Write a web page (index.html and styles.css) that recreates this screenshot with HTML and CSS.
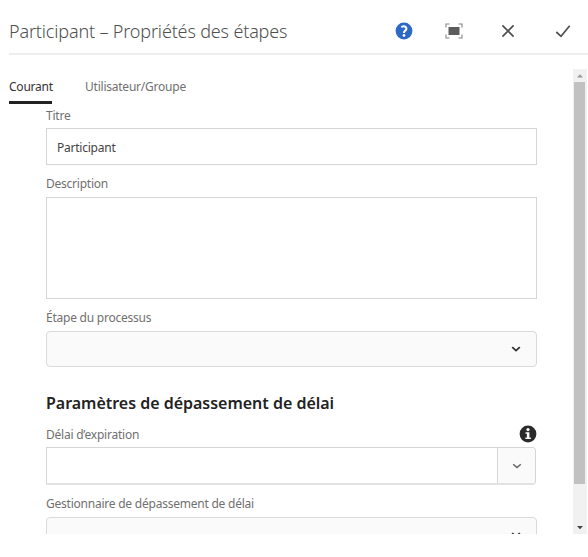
FILE: index.html
```html
<!DOCTYPE html>
<html lang="fr">
<head>
<meta charset="utf-8">
<title>Participant – Propriétés des étapes</title>
<link rel="stylesheet" href="styles.css">
</head>
<body>
<main class="dialog">
  <header class="header">
    <h1 class="title">Participant – Propriétés des étapes</h1>
    <svg class="icon help" viewBox="0 0 18 18"><circle cx="9" cy="9" r="8.4" fill="#2c69c6"/><path d="M6.3 5.1Q9 3.6 10.6 4.9C12.3 6.5 11.2 8 9.9 8.9Q9 9.5 9 11" fill="none" stroke="#fff" stroke-width="2"/><circle cx="9" cy="13.4" r="1.35" fill="#fff"/></svg>
    <svg class="icon full" viewBox="0 0 18 18"><rect x="3.5" y="5" width="11" height="8" fill="#5c5c5c"/><path d="M1 5.5V2H4.5M13.5 2H17V5.5M17 12.5V16H13.5M4.5 16H1V12.5" fill="none" stroke="#858585" stroke-width="1.1"/></svg>
    <svg class="icon close" viewBox="0 0 18 18"><path d="M3.4 3.4L14.6 14.6M14.6 3.4L3.4 14.6" fill="none" stroke="#505050" stroke-width="1.7"/></svg>
    <svg class="icon check" viewBox="0 0 18 18"><path d="M2.3 10L7 14.3L15.7 3.7" fill="none" stroke="#505050" stroke-width="1.7"/></svg>
  </header>
  <div class="body">
    <div class="content">
      <nav class="tabs"><a class="tab active">Courant</a><a class="tab">Utilisateur/Groupe</a></nav>
      <form class="form">
        <label class="label first">Titre</label>
        <div class="field">Participant</div>
        <label class="label">Description</label>
        <div class="field area"></div>
        <label class="label">Étape du processus</label>
        <div class="field select"><svg class="chevron" viewBox="0 0 10 8"><path d="M1.2 2.2L5 5.6L8.8 2.2" fill="none" stroke="#333" stroke-width="1.8"/></svg></div>
        <h2 class="section">Paramètres de dépassement de délai</h2>
        <div class="row">
          <label class="label">Délai d’expiration</label>
          <svg class="info" viewBox="0 0 18 18"><circle cx="9" cy="9" r="8.4" fill="#2b2b2b"/><circle cx="9" cy="4.6" r="1.6" fill="#fff"/><path d="M6.5 7.2H10.4V12.5H11.8V14.1H6.4V12.5H7.9V8.8H6.5Z" fill="#fff"/></svg>
        </div>
        <div class="combo"><div class="input"></div><div class="button"><svg class="chevron" viewBox="0 0 10 8"><path d="M1.2 2.2L5 5.6L8.8 2.2" fill="none" stroke="#666" stroke-width="1.5"/></svg></div></div>
        <label class="label">Gestionnaire de dépassement de délai</label>
        <div class="field select"><svg class="chevron" viewBox="0 0 10 8"><path d="M1.2 2.2L5 5.6L8.8 2.2" fill="none" stroke="#333" stroke-width="1.8"/></svg></div>
      </form>
    </div>
    <div class="scrollbar">
      <svg class="arrow" viewBox="0 0 14 13"><path d="M4 8.5L7 5.3L10 8.5Z" fill="#999"/></svg>
      <div class="thumb"></div>
      <svg class="arrow down" viewBox="0 0 14 13"><path d="M4 5L7 8.2L10 5Z" fill="#444"/></svg>
    </div>
  </div>
</main>
</body>
</html>
```
FILE: styles.css
```css
* { box-sizing: border-box; }
body { margin: 0; background: #fff; font-family: "Noto Sans", "Open Sans", sans-serif; font-size: 12px; letter-spacing: -0.23px; color: #707070; }
svg { display: block; flex: none; }
.dialog { width: 588px; height: 557px; overflow: hidden; }
.header { height: 55px; margin-left: 9px; padding-top: 8px; border-bottom: 2px solid #eee; display: flex; align-items: center; }
.title { flex: none; width: 386px; margin: 0; font-size: 18px; font-weight: 300; line-height: 24px; color: #505050; white-space: nowrap; letter-spacing: -0.16px; }
.icon { width: 18px; height: 18px; }
.full { margin-left: 32px; }
.close { margin-left: 36px; }
.check { margin-left: 37px; }
.body { height: 479px; display: flex; overflow: hidden; }
.content { width: 573px; height: 479px; overflow: hidden; }
.tabs { height: 49px; padding: 19px 0 0 9px; display: flex; gap: 33px; }
.tab { height: 30px; line-height: 25px; white-space: nowrap; }
.active { width: 43px; color: #333; border-bottom: 3px solid #222; }
.form { width: 491px; margin-left: 46px; }
.label { display: block; height: 32px; padding-top: 10px; line-height: 18px; white-space: nowrap; }
.first { height: 24px; padding-top: 3px; }
.field { height: 37px; border: 1px solid #d5d5d5; padding: 0 10px; line-height: 37px; color: #444; }
.area { height: 102px; }
.select { height: 36px; background: #fafafa; border-color: #dadada; border-radius: 4px; display: flex; align-items: center; justify-content: flex-end; padding-right: 15px; }
.chevron { width: 10px; height: 8px; }
.section { margin: 24px 0 0; height: 25px; line-height: 25px; font-size: 16px; font-weight: 600; letter-spacing: -0.02px; color: #222; white-space: nowrap; }
.row { display: flex; justify-content: space-between; height: 31px; }
.info { width: 18px; height: 18px; margin-top: 9px; }
.combo { width: 490px; height: 38px; display: flex; border: 1px solid #d5d5d5; border-bottom: 2px solid #e2e2e2; border-radius: 0 4px 4px 0; }
.input { flex: 1; }
.button { width: 38px; border-left: 1px solid #d5d5d5; background: #fafafa; display: flex; align-items: center; justify-content: center; border-radius: 0 3px 3px 0; }
.scrollbar { width: 14px; height: 465px; margin-top: 14px; background: #f1f1f1; display: flex; flex-direction: column; }
.arrow { width: 14px; height: 13px; }
.thumb { height: 402px; margin: 0 2px 0 1px; background: #c1c1c1; }
.down { margin-top: auto; }
```
